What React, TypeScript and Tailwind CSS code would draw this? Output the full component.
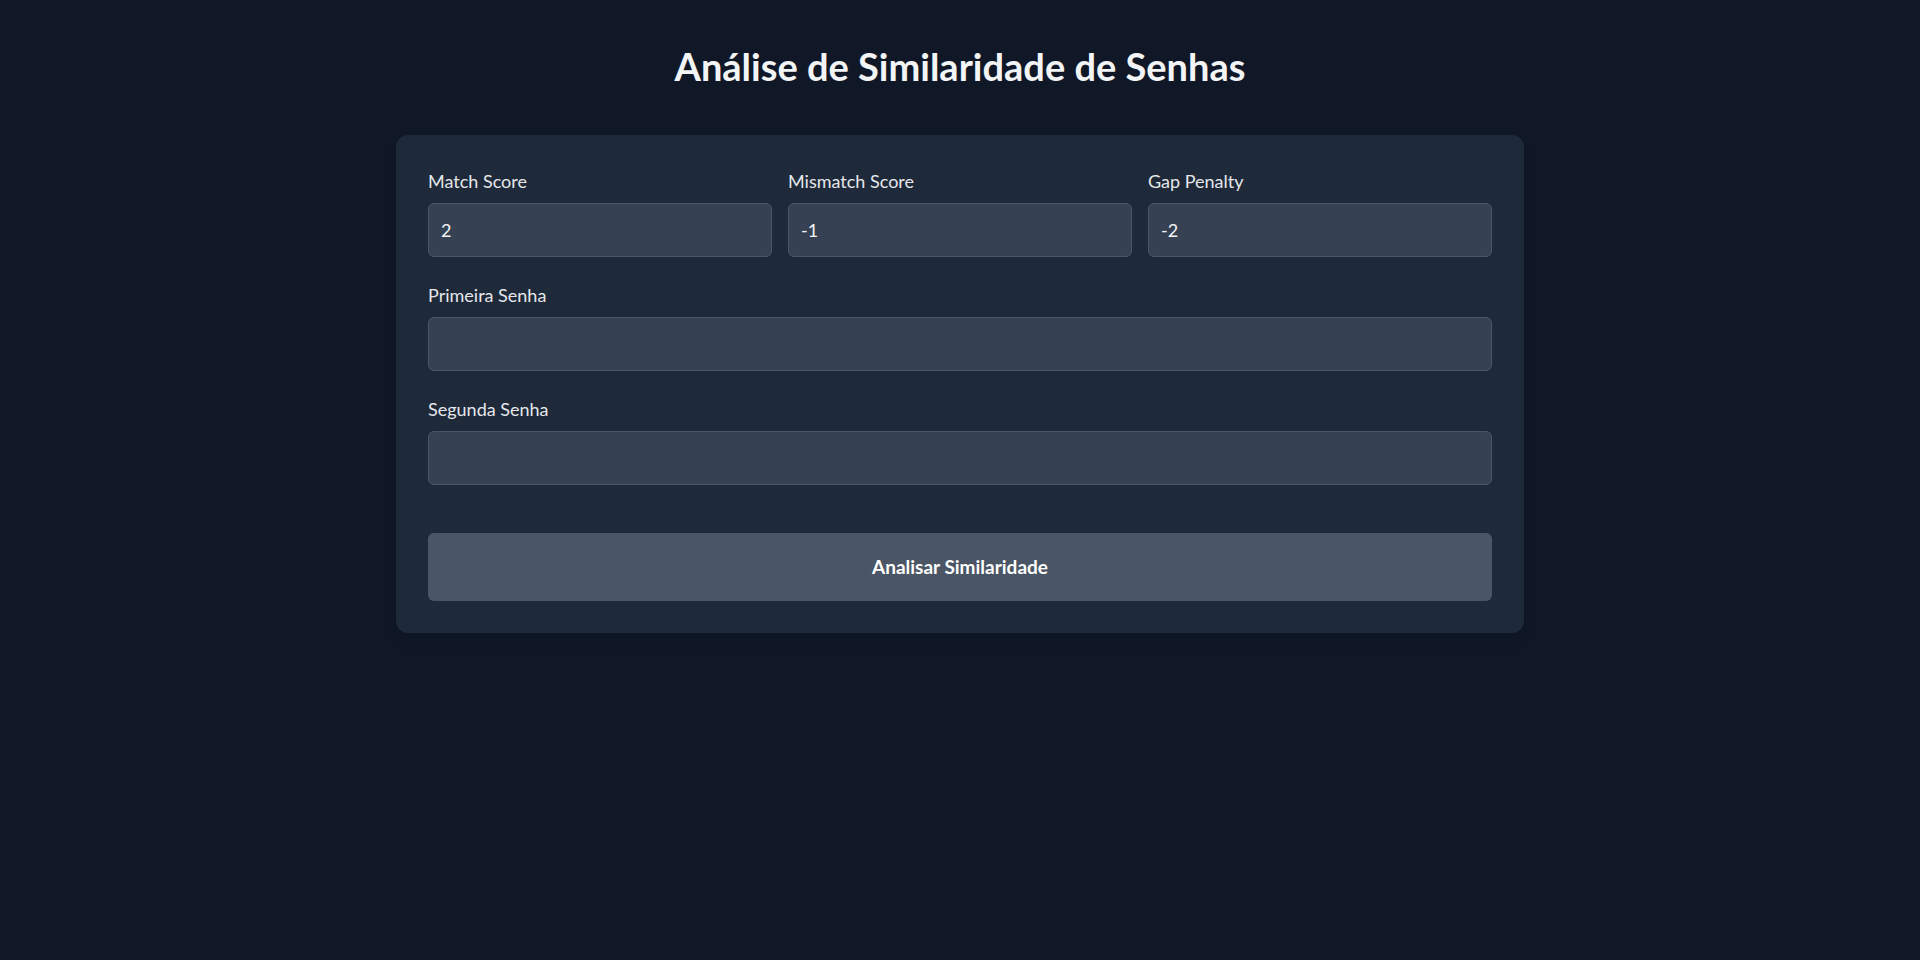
import { useState } from "react";

type FieldProps = {
  label: string;
  value: string;
  onChange: (v: string) => void;
  type?: string;
};

function Field({ label, value, onChange, type = "text" }: FieldProps) {
  return (
    <div className="flex flex-col">
      <label className="text-lg text-gray-200 mb-2">{label}</label>
      <input
        type={type}
        value={value}
        onChange={(e) => onChange(e.target.value)}
        className="w-full h-[54px] px-3 text-lg text-gray-100 bg-gray-700 border border-gray-600 rounded-md outline-none"
      />
    </div>
  );
}

export default function App() {
  const [match, setMatch] = useState("2");
  const [mismatch, setMismatch] = useState("-1");
  const [gap, setGap] = useState("-2");
  const [first, setFirst] = useState("");
  const [second, setSecond] = useState("");

  return (
    <div className="min-h-screen bg-gray-900 font-['Lato','Liberation_Sans',sans-serif]">
      <div className="w-[1128px] mx-auto pt-[46px]">
        <h1 className="text-[38px] leading-10 font-bold text-center text-gray-100 mb-[49px]">
          Análise de Similaridade de Senhas
        </h1>

        <div className="bg-gray-800 rounded-xl shadow-lg p-8 flex flex-col gap-6">
          <div className="grid grid-cols-3 gap-4">
            <Field label="Match Score" value={match} onChange={setMatch} />
            <Field label="Mismatch Score" value={mismatch} onChange={setMismatch} />
            <Field label="Gap Penalty" value={gap} onChange={setGap} />
          </div>
          <Field label="Primeira Senha" value={first} onChange={setFirst} />
          <Field label="Segunda Senha" value={second} onChange={setSecond} />
          <button
            disabled={!first || !second}
            className="mt-6 h-[68px] w-full rounded-md bg-gray-600 text-[19px] font-bold text-white"
          >
            Analisar Similaridade
          </button>
        </div>
      </div>
    </div>
  );
}
